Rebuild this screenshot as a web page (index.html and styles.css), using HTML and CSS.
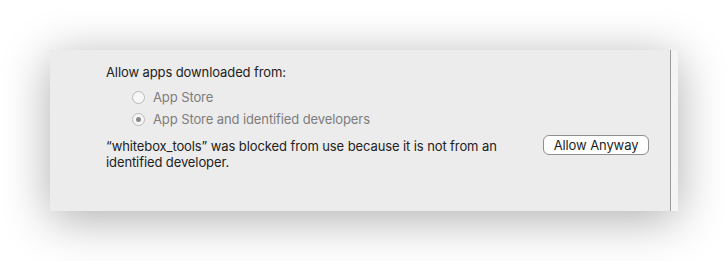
FILE: index.html
```html
<!DOCTYPE html>
<html>
<head>
<meta charset="utf-8">
<link rel="stylesheet" href="styles.css">
</head>
<body>
<div class="panel">
  <div class="content">
    <div class="heading">Allow apps downloaded from:</div>
    <div class="options">
      <div class="option"><span class="radio"></span><span class="label">App Store</span></div>
      <div class="option"><span class="radio checked"></span><span class="label">App Store and identified developers</span></div>
    </div>
    <div class="blocked">
      <p class="message">“whitebox_tools” was blocked from use because it is not from an<br>identified developer.</p>
      <button class="btn">Allow Anyway</button>
    </div>
  </div>
  <div class="divider"></div>
  <div class="strip"></div>
</div>
</body>
</html>
```
FILE: styles.css
```css
html, body {
  margin: 0;
  padding: 0;
  background: #ffffff;
}
body {
  width: 728px;
  height: 261px;
  overflow: hidden;
  font-family: "Inter", "Liberation Sans", sans-serif;
  font-size: 13px;
  color: #222222;
}
.panel {
  margin: 50px 0 0 50px;
  width: 628px;
  height: 161px;
  background: #ececec;
  display: flex;
  box-shadow: 0 8px 45px rgba(0, 0, 0, 0.32);
}
.content {
  flex: 1;
  padding: 14px 0 0 56px;
}
.heading {
  line-height: 16px;
  letter-spacing: -0.1px;
}
.options {
  padding: 9px 0 0 26px;
  display: flex;
  flex-direction: column;
  gap: 6px;
}
.option {
  display: flex;
  align-items: center;
  gap: 8px;
  height: 16px;
  color: #7d7d7d;
  letter-spacing: -0.1px;
}
.radio {
  width: 11px;
  height: 11px;
  border: 1px solid #b8b8b8;
  border-radius: 50%;
  background: #f7f7f7;
  display: flex;
  align-items: center;
  justify-content: center;
}
.radio.checked::after {
  content: "";
  width: 5px;
  height: 5px;
  border-radius: 50%;
  background: #8a8a8a;
}
.blocked {
  display: flex;
  align-items: flex-start;
  padding-top: 11px;
}
.message {
  margin: 0;
  width: 437px;
  line-height: 16px;
  letter-spacing: -0.1px;
}
.btn {
  margin-top: -3px;
  width: 106px;
  height: 20px;
  padding: 0;
  font-family: inherit;
  font-size: 13px;
  color: #1e1e1e;
  background: #ffffff;
  border: 1px solid #8e8e8e;
  border-radius: 6px;
  line-height: 18px;
  letter-spacing: -0.1px;
}
.divider {
  width: 1px;
  background: #9b9b9b;
}
.strip {
  width: 7px;
  background: #f4f4f4;
}
```
